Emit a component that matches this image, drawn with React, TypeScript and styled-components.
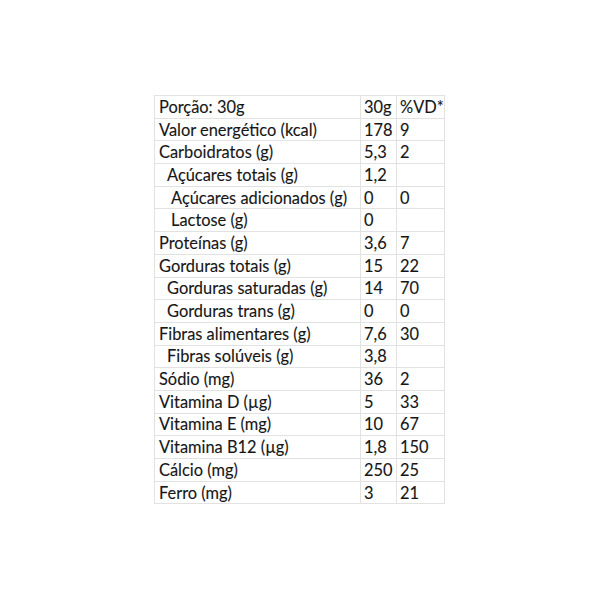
import React from 'react';
import styled, { createGlobalStyle } from 'styled-components';

type Row = {
  label: string;
  amount: string;
  vd: string;
  level?: 0 | 1 | 2;
};

const rows: Row[] = [
  { label: 'Porção: 30g', amount: '30g', vd: '%VD*' },
  { label: 'Valor energético (kcal)', amount: '178', vd: '9' },
  { label: 'Carboidratos (g)', amount: '5,3', vd: '2' },
  { label: 'Açúcares totais (g)', amount: '1,2', vd: '', level: 1 },
  { label: 'Açúcares adicionados (g)', amount: '0', vd: '0', level: 2 },
  { label: 'Lactose (g)', amount: '0', vd: '', level: 2 },
  { label: 'Proteínas (g)', amount: '3,6', vd: '7' },
  { label: 'Gorduras totais (g)', amount: '15', vd: '22' },
  { label: 'Gorduras saturadas (g)', amount: '14', vd: '70', level: 1 },
  { label: 'Gorduras trans (g)', amount: '0', vd: '0', level: 1 },
  { label: 'Fibras alimentares (g)', amount: '7,6', vd: '30' },
  { label: 'Fibras solúveis (g)', amount: '3,8', vd: '', level: 1 },
  { label: 'Sódio (mg)', amount: '36', vd: '2' },
  { label: 'Vitamina D (µg)', amount: '5', vd: '33' },
  { label: 'Vitamina E (mg)', amount: '10', vd: '67' },
  { label: 'Vitamina B12 (µg)', amount: '1,8', vd: '150' },
  { label: 'Cálcio (mg)', amount: '250', vd: '25' },
  { label: 'Ferro (mg)', amount: '3', vd: '21' },
];

const GlobalStyle = createGlobalStyle`
  html, body {
    margin: 0;
    padding: 0;
    background: #ffffff;
  }
`;

const Page = styled.div`
  width: 600px;
  height: 600px;
  padding: 95px 0 0 154px;
  box-sizing: border-box;
`;

const Sheet = styled.table`
  border-collapse: collapse;
  font-family: Lato, 'Liberation Sans', sans-serif;
  font-size: 16.4px;
  color: #161616;
  table-layout: fixed;
`;

const Cell = styled.td<{ $w: number; $indent?: number }>`
  width: ${(p) => p.$w}px;
  height: 22.7px;
  padding: 0 0 0 ${(p) => 3 + (p.$indent ?? 0)}px;
  border: 1px solid #e2e2e2;
  box-sizing: border-box;
  white-space: nowrap;
  line-height: 20px;
  vertical-align: middle;
  -webkit-text-stroke: 0.12px #161616;
`;

const indents = [4, 12, 16];

export default function App() {
  return (
    <>
      <GlobalStyle />
      <Page>
        <Sheet>
          <tbody>
            {rows.map((r) => (
              <tr key={r.label}>
                <Cell $w={206} $indent={indents[r.level ?? 0] - 3}>
                  {r.label}
                </Cell>
                <Cell $w={36}>{r.amount}</Cell>
                <Cell $w={48}>{r.vd}</Cell>
              </tr>
            ))}
          </tbody>
        </Sheet>
      </Page>
    </>
  );
}
